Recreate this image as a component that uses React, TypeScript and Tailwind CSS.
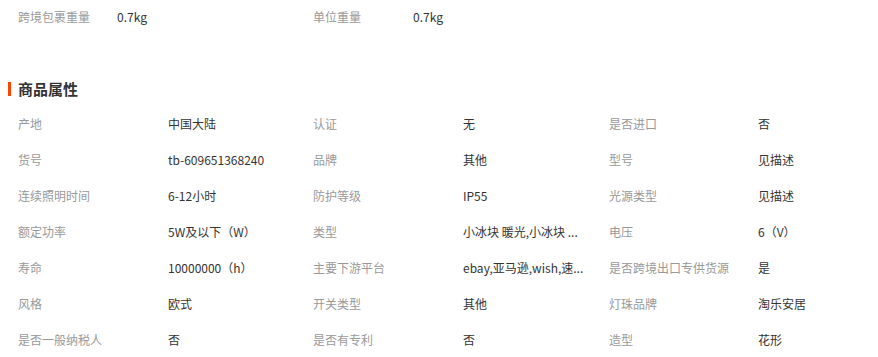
const attrs: [string, string][] = [
  ['产地', '中国大陆'],
  ['认证', '无'],
  ['是否进口', '否'],
  ['货号', 'tb-609651368240'],
  ['品牌', '其他'],
  ['型号', '见描述'],
  ['连续照明时间', '6-12小时'],
  ['防护等级', 'IP55'],
  ['光源类型', '见描述'],
  ['额定功率', '5W及以下（W）'],
  ['类型', '小冰块 暖光,小冰块 ...'],
  ['电压', '6（V）'],
  ['寿命', '10000000（h）'],
  ['主要下游平台', 'ebay,亚马逊,wish,速...'],
  ['是否跨境出口专供货源', '是'],
  ['风格', '欧式'],
  ['开关类型', '其他'],
  ['灯珠品牌', '淘乐安居'],
  ['是否一般纳税人', '否'],
  ['是否有专利', '否'],
  ['造型', '花形'],
];

export default function App() {
  return (
    <div
      className="w-[878px] h-[357px] bg-white overflow-hidden text-[12px]"
      style={{ fontFamily: '"Microsoft YaHei", "Noto Sans CJK SC", sans-serif' }}
    >
      {/* Package weight row */}
      <div className="grid grid-cols-[99px_196px_100px_1fr] pl-[18px] h-[34px] items-center">
        <span className="text-[#999]">跨境包裹重量</span>
        <span className="text-[#333]">0.7kg</span>
        <span className="text-[#999]">单位重量</span>
        <span className="text-[#333]">0.7kg</span>
      </div>

      {/* Section title */}
      <div className="mt-[38px] flex items-center h-[34px] pl-[8px]">
        <span className="w-[3px] h-[14px] bg-[#ff4400] mr-[7px]" />
        <span className="text-[15px] font-bold text-[#333]">商品属性</span>
      </div>

      {/* Attributes grid */}
      <div className="grid grid-cols-[150px_145px_150px_146px_149px_1fr] pl-[18px]">
        {attrs.map(([k, v]) => (
          <div key={k} className="contents">
            <div className="h-[36px] flex items-center text-[#999] whitespace-nowrap">{k}</div>
            <div className="h-[36px] flex items-center text-[#333] whitespace-nowrap">{v}</div>
          </div>
        ))}
      </div>
    </div>
  );
}
